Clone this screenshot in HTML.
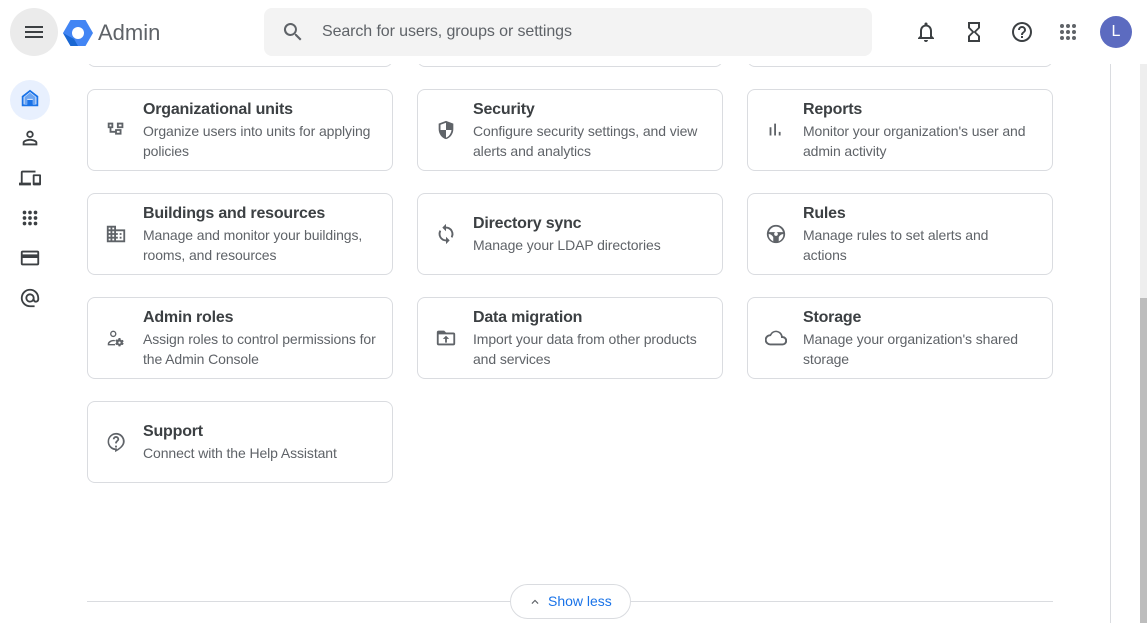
<!DOCTYPE html>
<html><head><meta charset="utf-8"><style>
*{box-sizing:border-box;margin:0;padding:0}
body{width:1147px;height:623px;overflow:hidden;background:#fff;font-family:"Liberation Sans",Arial,sans-serif;position:relative}
.hdr{position:absolute;left:0;top:0;width:1147px;height:64px;background:#fff;z-index:5}
.card{position:absolute;width:306px;height:82px;border:1px solid #dadce0;border-radius:8px;background:#fff}
.card svg{position:absolute;left:17px;top:50%;margin-top:-11px}
.t{position:absolute;left:55px;font-size:16px;color:#3c4043;font-weight:bold;letter-spacing:-0.2px}
.d{position:absolute;left:55px;font-size:14px;color:#5f6368;line-height:20px;width:234px;letter-spacing:-0.1px}
.ic{fill:#5f6368}
.sb svg{position:absolute;left:19px}
</style></head><body>
<div class="hdr">
 <div style="position:absolute;left:10px;top:8px;width:48px;height:48px;border-radius:50%;background:#ebebeb"></div>
 <svg style="position:absolute;left:22px;top:20px" width="24" height="24" viewBox="0 0 24 24"><path fill="#3c4043" d="M3 18h18v-2H3v2zm0-5h18v-2H3v2zm0-7v2h18V6H3z"/></svg>
 <svg style="position:absolute;left:63px;top:19px" width="30" height="28" viewBox="0 0 30 28"><path fill="#4285f4" d="M7.5 1h15L30 14l-7.5 13h-15L0 14z"/><path fill="#1a67d2" d="M0 14l7.5 13h7.5L11 20z"/><circle cx="15" cy="14" r="6" fill="#fff"/></svg>
 <div style="position:absolute;left:98px;top:20px;font-size:22px;color:#5f6368">Admin</div>
 <div style="position:absolute;left:264px;top:8px;width:608px;height:48px;border-radius:8px;background:#f3f3f3"></div>
 <svg style="position:absolute;left:281px;top:20px" width="24" height="24" viewBox="0 0 24 24"><path fill="#5f6368" d="M15.5 14h-.8l-.3-.3A6.5 6.5 0 1 0 9.5 16a6.5 6.5 0 0 0 4.2-1.6l.3.3v.8l5 5 1.5-1.5-5-5zm-6 0A4.5 4.5 0 1 1 14 9.5 4.5 4.5 0 0 1 9.5 14z"/></svg>
 <div style="position:absolute;left:322px;top:23px;font-size:16px;color:#5f6368;letter-spacing:-0.1px">Search for users, groups or settings</div>
 <svg style="position:absolute;left:914px;top:20px" width="24" height="24" viewBox="0 0 24 24"><path fill="#3c4043" d="M12 22c1.1 0 2-.9 2-2h-4a2 2 0 0 0 2 2zm6-6v-5c0-3.1-1.6-5.6-4.5-6.3V4a1.5 1.5 0 0 0-3 0v.7C7.6 5.4 6 7.9 6 11v5l-2 2v1h16v-1l-2-2zm-2 1H8v-6c0-2.5 1.5-4.5 4-4.5s4 2 4 4.5v6z"/></svg>
 <svg style="position:absolute;left:962px;top:20px" width="24" height="24" viewBox="0 0 24 24"><path fill="#3c4043" d="M6 2v6l4 4-4 4v6h12v-6l-4-4 4-4V2H6zm10 14.5V20H8v-3.5l4-4 4 4zm-4-5l-4-4V4h8v3.5l-4 4z"/></svg>
 <svg style="position:absolute;left:1010px;top:20px" width="24" height="24" viewBox="0 0 24 24"><path fill="#3c4043" d="M11 18h2v-2h-2v2zm1-16a10 10 0 1 0 0 20 10 10 0 0 0 0-20zm0 18a8 8 0 1 1 0-16 8 8 0 0 1 0 16zm0-14a4 4 0 0 0-4 4h2a2 2 0 0 1 4 0c0 2-3 1.75-3 5h2c0-2.25 3-2.5 3-5a4 4 0 0 0-4-4z"/></svg>
 <svg style="position:absolute;left:1056px;top:20px" width="24" height="24" viewBox="0 0 24 24" fill="#5f6368"><circle cx="6" cy="6" r="2"/><circle cx="12" cy="6" r="2"/><circle cx="18" cy="6" r="2"/><circle cx="6" cy="12" r="2"/><circle cx="12" cy="12" r="2"/><circle cx="18" cy="12" r="2"/><circle cx="6" cy="18" r="2"/><circle cx="12" cy="18" r="2"/><circle cx="18" cy="18" r="2"/></svg>
 <div style="position:absolute;left:1100px;top:16px;width:32px;height:32px;border-radius:50%;background:#5c6bc0;color:#fff;font-size:16px;text-align:center;line-height:32px">L</div>
</div>
<div class="card" style="left:87px;top:-20px;height:87px"></div>
<div class="card" style="left:417px;top:-20px;height:87px"></div>
<div class="card" style="left:747px;top:-20px;height:87px"></div>
<div class="sb">
 <div style="position:absolute;left:10px;top:80px;width:40px;height:40px;border-radius:50%;background:#e8f0fe"></div>
 <svg style="top:87px" width="22" height="22" viewBox="0 0 24 24"><path fill="#1a73e8" d="M12 3L3 10v11h18V10l-9-7zm7 16h-4v-5H9v5H5v-8l7-5.5 7 5.5v8z"/><path fill="#1a73e8" d="M6 11l6-4.7 6 4.7v7.5h-3V13H9v5.5H6z" opacity=".6"/></svg>
 <svg style="top:127px" width="22" height="22" viewBox="0 0 24 24"><path fill="#3c4043" d="M12 12a4 4 0 1 0 0-8 4 4 0 0 0 0 8zm0-6a2 2 0 1 1 0 4 2 2 0 0 1 0-4zm0 7c-2.7 0-8 1.3-8 4v3h16v-3c0-2.7-5.3-4-8-4zm6 5H6v-1c.2-.7 3.3-2 6-2s5.8 1.3 6 2v1z"/></svg>
 <svg style="top:167px" width="22" height="22" viewBox="0 0 24 24"><path fill="#3c4043" d="M4 6h14V4H4a2 2 0 0 0-2 2v11H0v3h13v-3H4V6zm19 2h-7a1 1 0 0 0-1 1v10a1 1 0 0 0 1 1h7a1 1 0 0 0 1-1V9a1 1 0 0 0-1-1zm-1 9h-5v-7h5v7z"/></svg>
 <svg style="top:207px" width="22" height="22" viewBox="0 0 24 24" fill="#3c4043"><circle cx="6" cy="6" r="2"/><circle cx="12" cy="6" r="2"/><circle cx="18" cy="6" r="2"/><circle cx="6" cy="12" r="2"/><circle cx="12" cy="12" r="2"/><circle cx="18" cy="12" r="2"/><circle cx="6" cy="18" r="2"/><circle cx="12" cy="18" r="2"/><circle cx="18" cy="18" r="2"/></svg>
 <svg style="top:247px" width="22" height="22" viewBox="0 0 24 24"><path fill="#3c4043" d="M20 4H4a2 2 0 0 0-2 2v12a2 2 0 0 0 2 2h16a2 2 0 0 0 2-2V6a2 2 0 0 0-2-2zm0 14H4v-6h16v6zm0-10H4V6h16v2z"/></svg>
 <svg style="top:287px" width="22" height="22" viewBox="0 0 24 24"><path fill="#3c4043" d="M12 2a10 10 0 0 0 0 20h5v-2h-5a8 8 0 1 1 8-8v1.4c0 .8-.7 1.6-1.5 1.6s-1.5-.8-1.5-1.6V12a5 5 0 1 0-1.5 3.5A3.7 3.7 0 0 0 18.5 17c2 0 3.5-1.6 3.5-3.6V12A10 10 0 0 0 12 2zm0 13a3 3 0 1 1 0-6 3 3 0 0 1 0 6z"/></svg>
</div>

<div class="card" style="left:87px;top:89px"><svg width="22" height="22" viewBox="0 0 24 24"><path class="ic" d="M3 4h6v6H7v3h4v-2h7v6h-7v-2H5v-5H3V4zm2 2v2h2V6H5zm8 7v2h3v-2h-3zm0-9h7v6h-7V4zm2 2v2h3V6h-3z"/></svg><div class="t" style="top:11px">Organizational units</div><div class="d" style="top:31px">Organize users into units for applying policies</div></div>
<div class="card" style="left:417px;top:89px"><svg width="22" height="22" viewBox="0 0 24 24"><path class="ic" d="M12 2L4 5v6c0 5 3.4 9.7 8 11 4.6-1.3 8-6 8-11V5l-8-3zm0 10h6c-.5 4-3 7.4-6 8.4V12H6V6.3l6-2.2V12z"/></svg><div class="t" style="top:11px">Security</div><div class="d" style="top:31px">Configure security settings, and view alerts and analytics</div></div>
<div class="card" style="left:747px;top:89px"><svg width="22" height="22" viewBox="0 0 24 24"><path class="ic" d="M5 9h2v9H5zm5-4h2v13h-2zm5 9h2v4h-2z"/></svg><div class="t" style="top:11px">Reports</div><div class="d" style="top:31px">Monitor your organization's user and admin activity</div></div>

<div class="card" style="left:87px;top:193px"><svg width="22" height="22" viewBox="0 0 24 24"><path class="ic" d="M12 7V3H2v18h20V7H12zM6 19H4v-2h2v2zm0-4H4v-2h2v2zm0-4H4V9h2v2zm0-4H4V5h2v2zm4 12H8v-2h2v2zm0-4H8v-2h2v2zm0-4H8V9h2v2zm0-4H8V5h2v2zm10 12h-8v-2h2v-2h-2v-2h2v-2h-2V9h8v10zm-2-8h-2v2h2v-2zm0 4h-2v2h2v-2z"/></svg><div class="t" style="top:11px">Buildings and resources</div><div class="d" style="top:31px">Manage and monitor your buildings, rooms, and resources</div></div>
<div class="card" style="left:417px;top:193px"><svg width="22" height="22" viewBox="0 0 24 24"><path class="ic" d="M12 4V1L8 5l4 4V6c3.3 0 6 2.7 6 6 0 1-.3 2-.7 2.8l1.5 1.5A8 8 0 0 0 12 4zm0 14c-3.3 0-6-2.7-6-6 0-1 .3-2 .7-2.8L5.2 7.7A8 8 0 0 0 12 20v3l4-4-4-4v3z"/></svg><div class="t" style="top:21px">Directory sync</div><div class="d" style="top:41px">Manage your LDAP directories</div></div>
<div class="card" style="left:747px;top:193px"><svg width="22" height="22" viewBox="0 0 24 24"><path class="ic" d="M12 2a10 10 0 1 0 0 20 10 10 0 0 0 0-20zm0 2c3.7 0 6.8 2.6 7.6 6H4.4C5.2 6.6 8.3 4 12 4zm-8 8c1.7 0 4 1.5 5 3.5V20A8 8 0 0 1 4 12zm8 2a2 2 0 1 1 0-4 2 2 0 0 1 0 4zm3 6v-4.5c1-2 3.3-3.5 5-3.5a8 8 0 0 1-5 8z"/></svg><div class="t" style="top:11px">Rules</div><div class="d" style="top:31px">Manage rules to set alerts and<br>actions</div></div>

<div class="card" style="left:87px;top:297px"><svg width="22" height="22" viewBox="0 0 24 24"><path class="ic" d="M9 11a3.5 3.5 0 1 0 0-7 3.5 3.5 0 0 0 0 7zm0-5.5a2 2 0 1 1 0 4 2 2 0 0 1 0-4zM3 18.5V20h8v-1.5H4.5c.3-1.2 2.5-3 4.5-3 .5 0 1 .1 1.5.2l.4-1.5A7 7 0 0 0 9 14c-3 0-6 2-6 4.5zM19.4 16.5l1-.8-1-1.7-1.2.4c-.3-.3-.7-.5-1.1-.6L16.8 12h-2l-.3 1.3c-.4.1-.8.3-1.1.6l-1.2-.4-1 1.7 1 .8v1.2l-1 .8 1 1.7 1.2-.4c.3.3.7.5 1.1.6l.3 1.3h2l.3-1.3c.4-.1.8-.3 1.1-.6l1.2.4 1-1.7-1-.8v-1.2zM15.8 18.3a1.2 1.2 0 1 1 0-2.5 1.2 1.2 0 0 1 0 2.5z"/></svg><div class="t" style="top:11px">Admin roles</div><div class="d" style="top:31px">Assign roles to control permissions for the Admin Console</div></div>
<div class="card" style="left:417px;top:297px"><svg width="22" height="22" viewBox="0 0 24 24"><path class="ic" d="M20 6h-8l-2-2H4a2 2 0 0 0-2 2v12a2 2 0 0 0 2 2h16a2 2 0 0 0 2-2V8a2 2 0 0 0-2-2zm0 12H4V8h16v10zM11 17h2v-4h2.5L12 9.5 8.5 13H11z"/></svg><div class="t" style="top:11px">Data migration</div><div class="d" style="top:31px">Import your data from other products and services</div></div>
<div class="card" style="left:747px;top:297px"><svg width="22" height="22" viewBox="0 0 24 24"><path class="ic" d="M19.4 10A7.5 7.5 0 0 0 5.4 8 6 6 0 0 0 6 20h13a5 5 0 0 0 .4-10zM19 18H6a4 4 0 0 1-.4-8h.7l.7-1.2A5.5 5.5 0 0 1 17.5 11v1H19a3 3 0 0 1 0 6z"/></svg><div class="t" style="top:11px">Storage</div><div class="d" style="top:31px">Manage your organization's shared storage</div></div>

<div class="card" style="left:87px;top:401px"><svg width="22" height="22" viewBox="0 0 24 24"><path class="ic" d="M11 18h2v-2h-2v2zm1-16a9.5 9.5 0 0 0-1 18.9V23c5-2.5 10.5-6.5 10.5-11.5A9.5 9.5 0 0 0 12 2zm1 16.8v1.2c3.5-2 6.5-5 6.5-8.5a7.5 7.5 0 1 0-7.5 7.5h1zM12 5.5a3.5 3.5 0 0 0-3.5 3.5h2a1.5 1.5 0 0 1 3 0c0 1.5-2.5 1.5-2.5 4.5h2c0-2 2.5-2.5 2.5-4.5A3.5 3.5 0 0 0 12 5.5z" fill-rule="evenodd"/></svg><div class="t" style="top:21px">Support</div><div class="d" style="top:41px">Connect with the Help Assistant</div></div>

<div style="position:absolute;left:87px;top:601px;width:966px;height:1px;background:#dadce0"></div>
<div style="position:absolute;left:510px;top:584px;width:121px;height:35px;border:1px solid #dadce0;border-radius:18px;background:#fff;font-size:14px;color:#1a73e8;line-height:33px;padding-left:37px">Show less
 <svg style="position:absolute;left:17px;top:10px" width="14" height="14" viewBox="0 0 24 24"><path fill="#5f6368" d="M7.4 15.4L12 10.8l4.6 4.6L18 14l-6-6-6 6z"/></svg></div>

<div style="position:absolute;left:1110px;top:64px;width:1px;height:559px;background:#dadce0"></div>
<div style="position:absolute;left:1140px;top:64px;width:7px;height:559px;background:#eeeeee"></div>
<div style="position:absolute;left:1140px;top:298px;width:7px;height:325px;background:#bdbdbd"></div>
</body></html>
